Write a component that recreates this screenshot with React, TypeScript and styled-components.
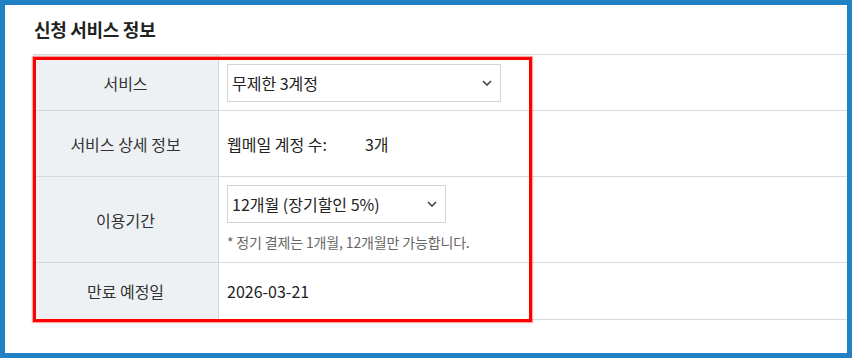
import styled, { createGlobalStyle } from 'styled-components';

const GlobalStyle = createGlobalStyle`
  html, body {
    margin: 0;
    padding: 0;
  }
  body {
    background: #2181c5;
    font-family: 'Noto Sans CJK KR', 'Noto Sans', sans-serif;
  }
`;

const Frame = styled.div`
  width: 852px;
  height: 358px;
  box-sizing: border-box;
  padding: 5px;
  background: #2181c5;
`;

const Panel = styled.div`
  position: relative;
  height: 100%;
  background: #ffffff;
  padding: 11px 0 0 28px;
  box-sizing: border-box;
  overflow: hidden;
`;

const Title = styled.h2`
  margin: 0 0 12px 1px;
  font-size: 18px;
  line-height: 26px;
  font-weight: 700;
  color: #222222;
  letter-spacing: -0.3px;
`;

const Table = styled.div`
  position: relative;
  border-top: 1px solid #d3d9dc;
`;

// height is the content height, the 1px bottom line comes on top of it
const Row = styled.div<{ $h: number }>`
  display: grid;
  grid-template-columns: 186px 1fr;
  height: ${({ $h }) => $h}px;
  border-bottom: 1px solid #d3d9dc;
`;

const Label = styled.div`
  display: flex;
  align-items: center;
  justify-content: center;
  background: #edf1f4;
  border-right: 1px solid #d3d9dc;
  font-size: 16px;
  color: #333333;
`;

const Value = styled.div<{ $top?: boolean }>`
  display: flex;
  flex-direction: column;
  justify-content: ${({ $top }) => ($top ? 'flex-start' : 'center')};
  padding: ${({ $top }) => ($top ? '8px' : '0')} 0 0 8px;
  font-size: 16px;
  color: #222222;
`;

const SelectBox = styled.div<{ $w: number }>`
  display: flex;
  align-items: center;
  justify-content: space-between;
  width: ${({ $w }) => $w}px;
  height: 38px;
  box-sizing: border-box;
  border: 1px solid #d4d4d4;
  padding: 0 8px 0 4px;
  font-size: 16px;
  color: #222222;
  background: #ffffff;
`;

const Chevron = styled.svg`
  width: 10px;
  height: 6px;
`;

const Note = styled.div`
  margin-top: 9px;
  font-size: 14px;
  line-height: 20px;
  letter-spacing: -0.15px;
  color: #666666;
`;

const Info = styled.div`
  display: flex;
  gap: 38px;
`;

const Highlight = styled.div`
  position: absolute;
  left: 0;
  top: 2px;
  width: 499px;
  height: 265px;
  box-sizing: border-box;
  border: 3px solid #ff0000;
  box-shadow: 0 0 1px 1px rgba(255, 0, 0, 0.35);
  pointer-events: none;
`;

const Select = ({ w, children }: { w: number; children: React.ReactNode }) => (
  <SelectBox $w={w}>
    <span>{children}</span>
    <Chevron viewBox="0 0 10 6">
      <path d="M1 1l4 4 4-4" fill="none" stroke="#444" strokeWidth="1.6" />
    </Chevron>
  </SelectBox>
);

const App: React.FC = () => {
  return (
    <Frame>
      <GlobalStyle />
      <Panel>
        <Title>신청 서비스 정보</Title>
        <Table>
          <Row $h={55}>
            <Label>서비스</Label>
            <Value>
              <Select w={274}>무제한 3계정</Select>
            </Value>
          </Row>
          <Row $h={65}>
            <Label>서비스 상세 정보</Label>
            <Value>
              <Info>
                <span>웹메일 계정 수:</span>
                <span>3개</span>
              </Info>
            </Value>
          </Row>
          <Row $h={85}>
            <Label>이용기간</Label>
            <Value $top>
              <Select w={219}>12개월 (장기할인 5%)</Select>
              <Note>* 정기 결제는 1개월, 12개월만 가능합니다.</Note>
            </Value>
          </Row>
          <Row $h={56}>
            <Label>만료 예정일</Label>
            <Value>2026-03-21</Value>
          </Row>
          <Highlight />
        </Table>
      </Panel>
    </Frame>
  );
};

export default App;
